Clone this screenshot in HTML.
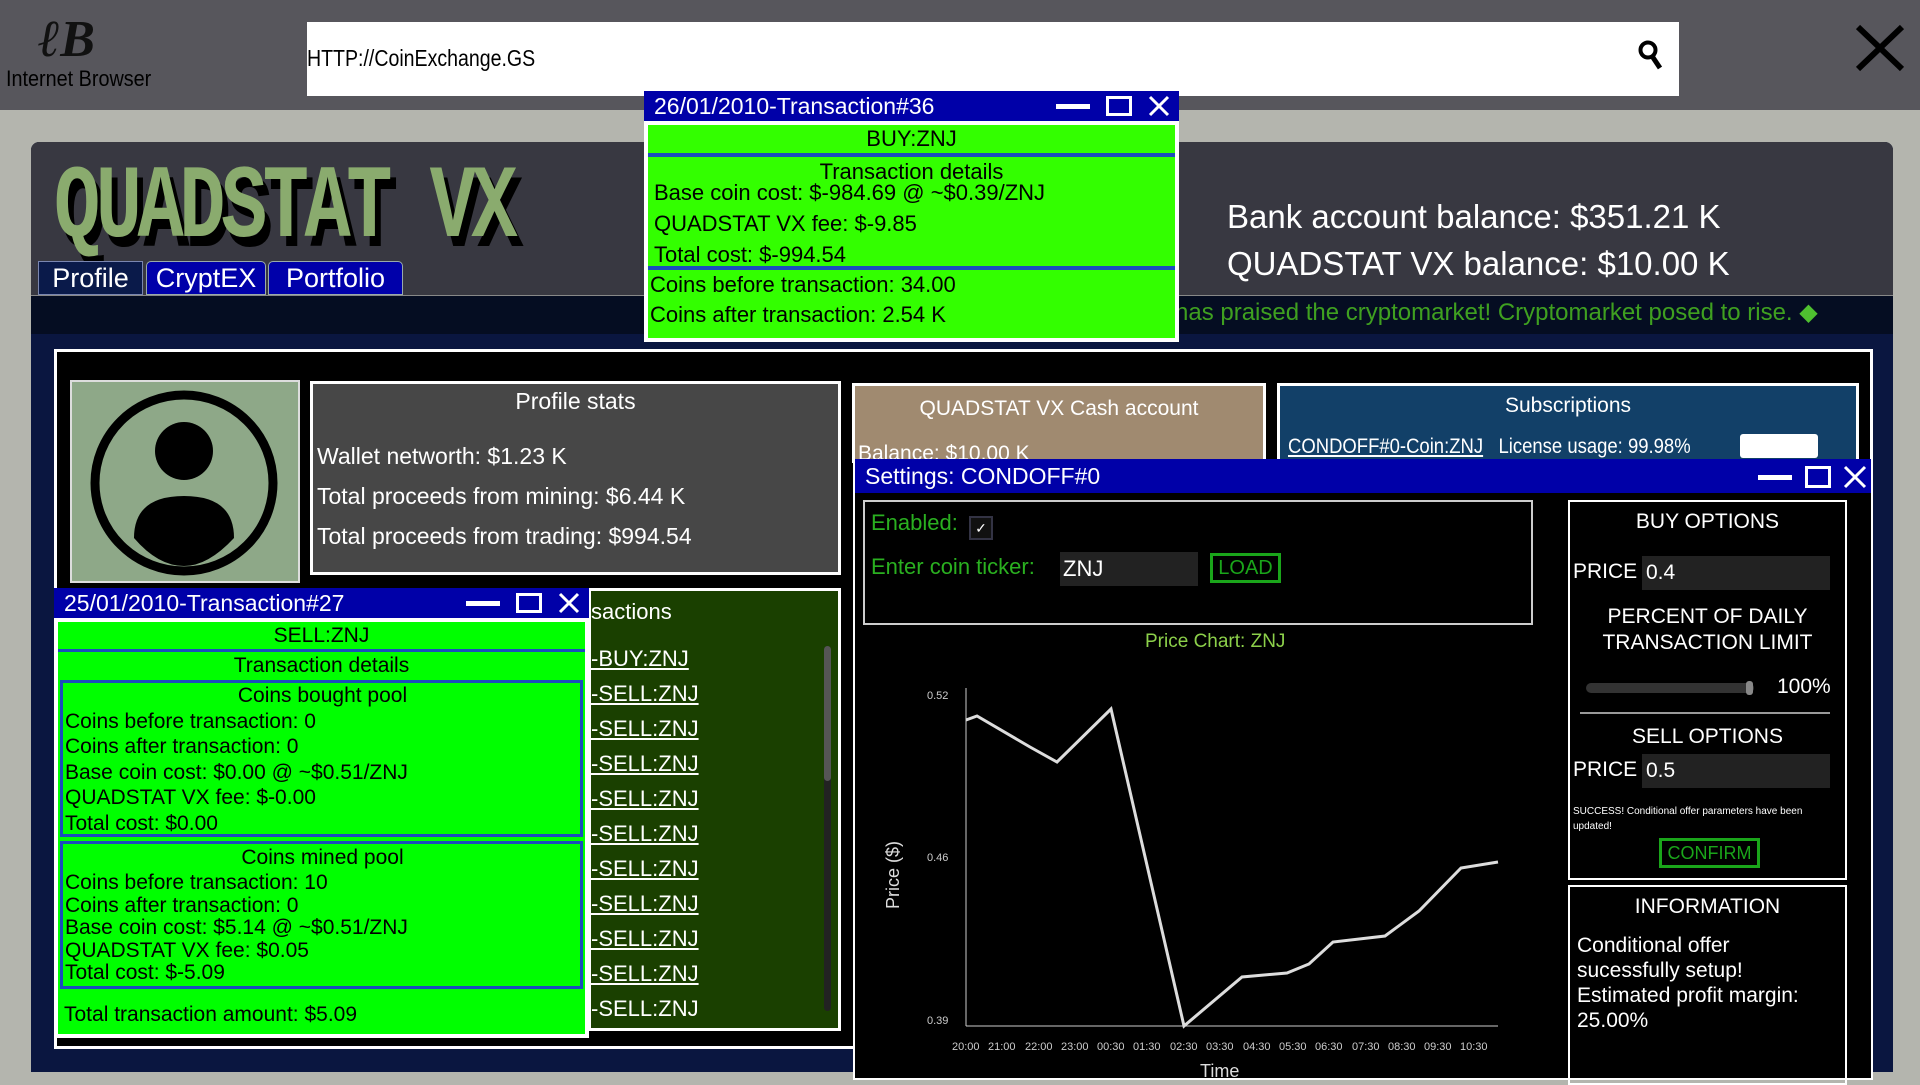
<!DOCTYPE html>
<html><head><meta charset="utf-8"><style>
*{margin:0;padding:0;box-sizing:border-box}
body{width:1920px;height:1080px;overflow:hidden;background:#b4b5ae;font-family:"Liberation Sans Narrow","Liberation Sans",sans-serif;position:relative}
.a{position:absolute}
.t{white-space:nowrap}
.win-title{background:#0000a8;color:#fff;font-size:23px;padding-left:10px;line-height:30px}
</style></head><body>
<div class="a" style="left:0;top:0;width:1920px;height:110px;background:#57565c"></div>
<div class="a t" style="left:38px;top:10px;font-family:'Liberation Serif',serif;font-size:52px;font-weight:bold;color:#111;font-style:italic">ℓB</div>
<div class="a t" style="left:6px;top:66px;font-size:22px;color:#000;transform:scaleX(0.9);transform-origin:left">Internet Browser</div>
<div class="a" style="left:307px;top:22px;width:1372px;height:74px;background:#fff"></div>
<div class="a t" style="left:307px;top:45px;font-size:23px;color:#000;transform:scaleX(0.85);transform-origin:left">HTTP://CoinExchange.GS</div>
<svg class="a" style="left:1638px;top:40px" width="26" height="32" viewBox="0 0 26 32"><circle cx="10" cy="10" r="7.5" fill="none" stroke="#000" stroke-width="4"/><line x1="14" y1="16" x2="22" y2="28" stroke="#000" stroke-width="5"/></svg>
<svg class="a" style="left:1855px;top:24px" width="50" height="48"><path d="M3 3L47 45M47 3L3 45" stroke="#000" stroke-width="6"/></svg>

<div class="a" style="left:31px;top:142px;width:1862px;height:930px;background:#0a1640;border-radius:8px 8px 0 0;overflow:hidden">
  <div class="a" style="left:0;top:0;width:1862px;height:153px;background:#383841"></div>
  <div class="a" style="left:0;top:153px;width:1862px;height:39px;background:#050d22;border-top:1px solid #888"></div>
</div>
<div class="a t" style="left:54px;top:150px;font-family:'Liberation Mono',monospace;font-size:104px;letter-spacing:-6px;color:#8aab6e;text-shadow:8px 10px 0 #000;transform:scaleX(0.74);transform-origin:left;font-weight:bold">QUADSTAT VX</div>
<div class="a t" style="left:38px;top:261px;width:105px;height:34px;background:#0a1a4a;border:1px solid #7a86b0;color:#fff;font-size:27px;text-align:center;line-height:32px">Profile</div>
<div class="a t" style="left:146px;top:261px;width:120px;height:34px;background:#0000aa;border:1px solid #9aa;border-radius:5px 5px 0 0;color:#fff;font-size:27px;text-align:center;line-height:32px">CryptEX</div>
<div class="a t" style="left:268px;top:261px;width:135px;height:34px;background:#0000aa;border:1px solid #9aa;border-radius:5px 5px 0 0;color:#fff;font-size:27px;text-align:center;line-height:32px">Portfolio</div>
<div class="a t" style="left:1227px;top:193px;font-size:33px;color:#fff;line-height:47px">Bank account balance: $351.21 K<br>QUADSTAT VX balance: $10.00 K</div>
<div class="a t" style="left:1175px;top:298px;font-size:24px;color:#3fa020">has praised the cryptomarket! Cryptomarket posed to rise. <span style="color:#4fc030">◆</span></div>

<div class="a" style="left:54px;top:349px;width:1819px;height:700px;background:#000;border:3px solid #fff"></div>

<div class="a" style="left:70px;top:380px;width:230px;height:203px;background:#8ea888;border:2px solid #ddd"></div>
<svg class="a" style="left:88px;top:388px" width="192" height="190"><ellipse cx="96" cy="95" rx="89" ry="88" fill="none" stroke="#000" stroke-width="9"/><circle cx="96" cy="63" r="29" fill="#000"/><path d="M46 150 Q46 108 96 108 Q146 108 146 150 Q120 178 96 178 Q70 178 46 150Z" fill="#000"/></svg>

<div class="a" style="left:310px;top:381px;width:531px;height:194px;background:#474747;border:3px solid #fff;color:#fff;font-size:23px">
  <div style="text-align:center;margin-top:4px">Profile stats</div>
  <div style="position:absolute;left:4px;top:52px;line-height:40px" class="t">Wallet networth: $1.23 K<br>Total proceeds from mining: $6.44 K<br>Total proceeds from trading: $994.54</div>
</div>

<div class="a" style="left:852px;top:383px;width:414px;height:80px;background:#a08a70;border:3px solid #fff;color:#fff;font-size:21px;overflow:hidden">
  <div style="text-align:center;margin-top:11px">QUADSTAT VX Cash account</div>
  <div style="position:absolute;left:3px;top:56px" class="t">Balance: $10.00 K</div>
</div>
<div class="a" style="left:1277px;top:383px;width:582px;height:80px;background:#124068;border:3px solid #fff;color:#fff;font-size:21px;overflow:hidden">
  <div style="text-align:center;margin-top:8px">Subscriptions</div>
  <div style="position:absolute;left:8px;top:49px;transform:scaleX(0.88);transform-origin:left" class="t"><u>CONDOFF#0-Coin:ZNJ</u>&nbsp;&nbsp;&nbsp;License usage: 99.98%</div>
  <div style="position:absolute;left:460px;top:48px;width:78px;height:24px;background:#fff;border-radius:3px"></div>
</div>

<div class="a" style="left:588px;top:588px;width:253px;height:443px;background:#1a4000;border:3px solid #fff;color:#fff;font-size:22px">
  <div class="a t" style="left:0;top:8px">sactions</div>
  <div class="a t" style="left:0;top:50px;line-height:35px">
  <u>-BUY:ZNJ</u><br><u>-SELL:ZNJ</u><br><u>-SELL:ZNJ</u><br><u>-SELL:ZNJ</u><br><u>-SELL:ZNJ</u><br><u>-SELL:ZNJ</u><br><u>-SELL:ZNJ</u><br><u>-SELL:ZNJ</u><br><u>-SELL:ZNJ</u><br><u>-SELL:ZNJ</u><br>-SELL:ZNJ</div>
  <div class="a" style="left:233px;top:55px;width:7px;height:365px;background:#222;border-radius:4px"></div>
  <div class="a" style="left:233px;top:55px;width:7px;height:135px;background:#555;border-radius:4px"></div>
</div>

<div class="a" style="left:54px;top:588px;width:535px;height:450px;background:#fff">
  <div class="win-title t" style="height:30px">25/01/2010-Transaction#27</div>
  <div class="a" style="left:412px;top:13px;width:34px;height:5px;background:#fff"></div>
  <div class="a" style="left:462px;top:5px;width:26px;height:20px;border:3px solid #fff"></div>
  <svg class="a" style="left:504px;top:4px" width="22" height="22"><path d="M2 2L20 20M20 2L2 20" stroke="#fff" stroke-width="3"/></svg>
  <div class="a" style="left:4px;top:34px;width:527px;height:412px;background:#00ff00;color:#000;font-size:21px">
    <div style="text-align:center;height:30px;line-height:28px;border-bottom:3px solid #1b4dbd">SELL:ZNJ</div>
    <div style="text-align:center;line-height:28px">Transaction details</div>
    <div style="margin:0 2px;border:3px solid #1b4dbd;line-height:25.5px;padding-left:2px;height:157px">
      <div style="text-align:center">Coins bought pool</div>Coins before transaction: 0<br>Coins after transaction: 0<br>Base coin cost: $0.00 @ ~$0.51/ZNJ<br>QUADSTAT VX fee: $-0.00<br>Total cost: $0.00</div>
    <div style="margin:4px 2px 0;border:3px solid #1b4dbd;line-height:22.5px;padding-left:2px;height:148px">
      <div style="text-align:center;line-height:28px">Coins mined pool</div>Coins before transaction: 10<br>Coins after transaction: 0<br>Base coin cost: $5.14 @ ~$0.51/ZNJ<br>QUADSTAT VX fee: $0.05<br>Total cost: $-5.09</div>
    <div style="padding-left:6px;margin-top:14px">Total transaction amount: $5.09</div>
  </div>
</div>

<div class="a" style="left:644px;top:91px;width:535px;height:251px;background:#fff">
  <div class="win-title t" style="height:30px">26/01/2010-Transaction#36</div>
  <div class="a" style="left:412px;top:13px;width:34px;height:5px;background:#fff"></div>
  <div class="a" style="left:462px;top:5px;width:26px;height:20px;border:3px solid #fff"></div>
  <svg class="a" style="left:504px;top:4px" width="22" height="22"><path d="M2 2L20 20M20 2L2 20" stroke="#fff" stroke-width="3"/></svg>
  <div class="a" style="left:4px;top:34px;width:527px;height:213px;background:#33ff00;color:#000;font-size:22px">
    <div style="text-align:center;height:32px;line-height:28px;border-bottom:4px solid #1b4dbd">BUY:ZNJ</div>
    <div style="text-align:center;line-height:22px;margin-top:4px">Transaction details</div>
    <div style="padding-left:6px;line-height:31px;margin-top:-6px;height:79px">Base coin cost: $-984.69 @ ~$0.39/ZNJ<br>QUADSTAT VX fee: $-9.85<br>Total cost: $-994.54</div>
    <div style="border-top:4px solid #1b4dbd;padding-left:2px;line-height:30px;margin-top:10px">Coins before transaction: 34.00<br>Coins after transaction: 2.54 K</div>
  </div>
</div>

<div class="a" style="left:853px;top:459px;width:1020px;height:621px;background:#000;border:2px solid #fff;border-top:none">
  <div class="win-title t" style="height:34px;line-height:34px;font-size:23px;padding-left:10px">Settings: CONDOFF#0</div>
  <div class="a" style="left:903px;top:16px;width:34px;height:5px;background:#fff"></div>
  <div class="a" style="left:950px;top:7px;width:26px;height:22px;border:3px solid #fff"></div>
  <svg class="a" style="left:988px;top:6px" width="24" height="24"><path d="M2 2L22 22M22 2L2 22" stroke="#fff" stroke-width="3"/></svg>
  <div class="a" style="left:8px;top:41px;width:670px;height:125px;border:2px solid #ccc">
    <div class="a t" style="left:6px;top:8px;color:#2ab020;font-size:22px">Enabled:</div>
    <div class="a" style="left:104px;top:14px;width:24px;height:24px;border:2px solid #334;background:#111;color:#fff;font-size:14px;text-align:center;line-height:20px">✓</div>
    <div class="a t" style="left:6px;top:52px;color:#2ab020;font-size:22px">Enter coin ticker:</div>
    <div class="a t" style="left:195px;top:50px;width:138px;height:34px;background:#222;color:#fff;font-size:22px;line-height:34px;padding-left:3px">ZNJ</div>
    <div class="a t" style="left:345px;top:51px;width:71px;height:30px;border:3px solid #1aa51a;color:#1aa51a;font-size:20px;text-align:center;line-height:24px">LOAD</div>
  </div>
  <div class="a t" style="left:290px;top:172px;color:#8cd04a;font-size:19px">Price Chart: ZNJ</div>
  <svg class="a" style="left:0;top:0" width="700" height="621">
    <line x1="111" y1="229" x2="111" y2="567" stroke="#ccc" stroke-width="1"/>
    <line x1="111" y1="567" x2="643" y2="567" stroke="#ccc" stroke-width="1"/>
    <polyline fill="none" stroke="#ddd" stroke-width="3" points="111,261 122,257 175,288 202,303 256,250 329,567 387,518 432,514 454,505 478,483 530,477 564,452 606,409 643,403"/>
    <g fill="#ccc" font-family="Liberation Sans Narrow, Liberation Sans, sans-serif" font-size="11">
      <text x="72" y="240">0.52</text><text x="72" y="402">0.46</text><text x="72" y="565">0.39</text>
      <text x="97" y="591">20:00</text><text x="133" y="591">21:00</text><text x="170" y="591">22:00</text><text x="206" y="591">23:00</text><text x="242" y="591">00:30</text><text x="278" y="591">01:30</text><text x="315" y="591">02:30</text><text x="351" y="591">03:30</text><text x="388" y="591">04:30</text><text x="424" y="591">05:30</text><text x="460" y="591">06:30</text><text x="497" y="591">07:30</text><text x="533" y="591">08:30</text><text x="569" y="591">09:30</text><text x="605" y="591">10:30</text>
    </g>
    <text x="345" y="618" fill="#ddd" font-size="18" font-family="Liberation Sans Narrow, Liberation Sans, sans-serif">Time</text>
    <text transform="translate(44,450) rotate(-90)" fill="#ddd" font-size="18" font-family="Liberation Sans, sans-serif">Price ($)</text>
  </svg>
  <div class="a" style="left:713px;top:41px;width:279px;height:380px;border:2px solid #fff;color:#fff;font-size:21px">
    <div style="text-align:center;margin-top:8px">BUY OPTIONS</div>
    <div class="a t" style="left:3px;top:58px">PRICE</div>
    <div class="a t" style="left:72px;top:54px;width:188px;height:34px;background:#222;line-height:34px;padding-left:4px">0.4</div>
    <div class="a" style="left:0;top:102px;width:275px;text-align:center;line-height:26px">PERCENT OF DAILY<br>TRANSACTION LIMIT</div>
    <div class="a" style="left:16px;top:181px;width:168px;height:10px;background:#333;border-radius:5px"></div>
    <div class="a" style="left:176px;top:179px;width:7px;height:14px;background:#888;border-radius:3px"></div>
    <div class="a t" style="left:207px;top:173px">100%</div>
    <div class="a" style="left:10px;top:210px;width:250px;height:2px;background:#999"></div>
    <div class="a" style="left:0;top:223px;width:275px;text-align:center">SELL OPTIONS</div>
    <div class="a t" style="left:3px;top:256px">PRICE</div>
    <div class="a t" style="left:72px;top:252px;width:188px;height:34px;background:#222;line-height:34px;padding-left:4px">0.5</div>
    <div class="a" style="left:3px;top:302px;width:270px;font-size:10px;line-height:15px">SUCCESS! Conditional offer parameters have been updated!</div>
    <div class="a t" style="left:89px;top:336px;width:101px;height:30px;border:3px solid #1aa51a;color:#1aa51a;text-align:center;line-height:24px;font-size:18px">CONFIRM</div>
  </div>
  <div class="a" style="left:713px;top:426px;width:279px;height:200px;border:2px solid #fff;color:#fff;font-size:21px">
    <div style="text-align:center;margin-top:8px">INFORMATION</div>
    <div style="padding-left:7px;margin-top:14px;line-height:25px">Conditional offer<br>sucessfully setup!<br>Estimated profit margin:<br>25.00%</div>
  </div>
</div>
</body></html>
